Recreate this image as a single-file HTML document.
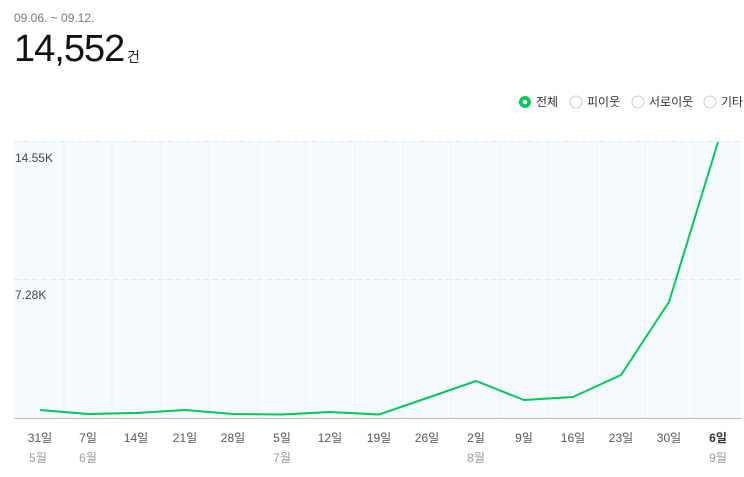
<!DOCTYPE html>
<html><head><meta charset="utf-8"><style>
body{margin:0;width:744px;height:477px;background:#fff;font-family:"Liberation Sans","Noto Sans CJK KR",sans-serif;overflow:hidden;position:relative}
.a{position:absolute;white-space:nowrap}
</style></head><body>
<div class="a" style="left:14px;top:11px;font-size:12px;color:#777">09.06. ~ 09.12.</div>
<div class="a" style="left:14px;top:28px;font-size:38px;color:#111;letter-spacing:-1px">14,552</div>
<div class="a" style="left:127px;top:47px;font-size:14px;color:#222">건</div>
<svg class="a" style="left:0;top:0" width="744" height="477">
<g font-size="12" fill="#333" font-family="Liberation Sans,Noto Sans CJK KR,sans-serif">
<circle cx="525" cy="102" r="6" fill="#03c75a"/><circle cx="525" cy="102" r="2.2" fill="#fff"/>
<text x="536" y="106">전체</text>
<circle cx="576" cy="102" r="6" fill="#fff" stroke="#ccc"/><text x="587" y="106">피이웃</text>
<circle cx="638" cy="102" r="6" fill="#fff" stroke="#ccc"/><text x="649" y="106">서로이웃</text>
<circle cx="710" cy="102" r="6" fill="#fff" stroke="#ccc"/><text x="721" y="106">기타</text>
</g>
<rect x="14" y="141" width="727" height="277" fill="#f5faff"/>
<g stroke="#e8f1fb" stroke-width="1">
<line x1="64" y1="141" x2="64" y2="418"/><line x1="112" y1="141" x2="112" y2="418"/><line x1="161" y1="141" x2="161" y2="418"/><line x1="209" y1="141" x2="209" y2="418"/><line x1="258" y1="141" x2="258" y2="418"/><line x1="306" y1="141" x2="306" y2="418"/><line x1="355" y1="141" x2="355" y2="418"/><line x1="403" y1="141" x2="403" y2="418"/><line x1="451" y1="141" x2="451" y2="418"/><line x1="500" y1="141" x2="500" y2="418"/><line x1="548" y1="141" x2="548" y2="418"/><line x1="597" y1="141" x2="597" y2="418"/><line x1="645" y1="141" x2="645" y2="418"/><line x1="694" y1="141" x2="694" y2="418"/>
</g>
<line x1="14" y1="141.5" x2="741" y2="141.5" stroke="#dde6ef" stroke-dasharray="6,3"/>
<line x1="14" y1="279.5" x2="741" y2="279.5" stroke="#dde6ef" stroke-dasharray="6,3"/>
<line x1="14" y1="418.5" x2="741" y2="418.5" stroke="#bbb"/>
<g font-size="12" fill="#444" font-family="Liberation Sans,Noto Sans CJK KR,sans-serif">
<text x="15" y="162">14.55K</text><text x="15" y="299">7.28K</text>
</g>
<polyline fill="none" stroke="#03c75a" stroke-width="2" stroke-linejoin="round" points="40,410 88,414 136,413 185,410 233,414 282,414.5 330,412 379,414.5 427,398 476,381 524,400 573,397 621,375 669,302 718,142"/>
<g font-size="12" fill="#555" text-anchor="middle" font-family="Liberation Sans,Noto Sans CJK KR,sans-serif">
<text x="40" y="442">31일</text><text x="88" y="442">7일</text><text x="136" y="442">14일</text><text x="185" y="442">21일</text><text x="233" y="442">28일</text><text x="282" y="442">5일</text><text x="330" y="442">12일</text><text x="379" y="442">19일</text><text x="427" y="442">26일</text><text x="476" y="442">2일</text><text x="524" y="442">9일</text><text x="573" y="442">16일</text><text x="621" y="442">23일</text><text x="669" y="442">30일</text><text x="718" y="442" font-weight="bold" fill="#333">6일</text>
</g>
<g font-size="12" fill="#999" text-anchor="middle" font-family="Liberation Sans,Noto Sans CJK KR,sans-serif">
<text x="38" y="462">5월</text><text x="88" y="462">6월</text><text x="282" y="462">7월</text><text x="476" y="462">8월</text><text x="718" y="462">9월</text>
</g>
</svg>
</body></html>
